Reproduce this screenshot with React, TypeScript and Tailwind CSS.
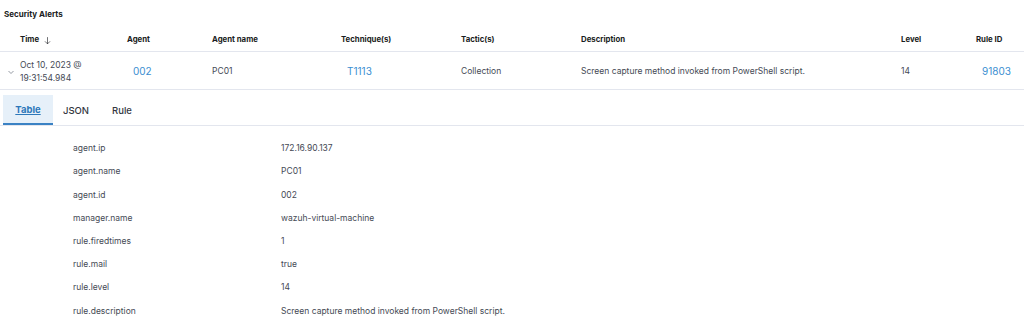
import React from "react";

const columns = [
  { label: "Time", w: "w-[107px]", sort: true },
  { label: "Agent", w: "w-[85px]" },
  { label: "Agent name", w: "w-[129px]" },
  { label: "Technique(s)", w: "w-[120px]" },
  { label: "Tactic(s)", w: "w-[120px]" },
  { label: "Description", w: "w-[320px]" },
  { label: "Level", w: "w-[75px]" },
  { label: "Rule ID", w: "w-[48px]" },
];

const fields: [string, string][] = [
  ["agent.ip", "172.16.90.137"],
  ["agent.name", "PC01"],
  ["agent.id", "002"],
  ["manager.name", "wazuh-virtual-machine"],
  ["rule.firedtimes", "1"],
  ["rule.mail", "true"],
  ["rule.level", "14"],
  ["rule.description", "Screen capture method invoked from PowerShell script."],
];

export default function App() {
  return (
    <div className="w-[1024px] h-[321px] overflow-hidden bg-white text-[#404550] font-['Inter',sans-serif]">
      {/* Titulo */}
      <div className="h-[29px] pl-[4px] pt-[8px] text-[8px] font-bold text-[#1a1c21]">Security Alerts</div>

      {/* Cabecalho */}
      <div className="flex h-[23px] items-center border-b border-[#e3e6ee] text-[7.8px] font-bold text-[#1a1c21]">
        <div className="w-[20px]" />
        {columns.map((c) => (
          <div key={c.label} className={`${c.w} flex items-center gap-[4px] shrink-0`}>
            {c.label}
            {c.sort && (
              <svg width="9" height="9" viewBox="0 0 16 16" fill="none" stroke="#1a1c21" strokeWidth="1.1">
                <path d="M8 2v12M3.5 9.5L8 14l4.5-4.5" />
              </svg>
            )}
          </div>
        ))}
      </div>

      {/* Linha */}
      <div className="flex h-[38px] items-center border-b border-[#e3e6ee] pt-[2px] text-[8.5px] text-[#454a55]">
        <div className="w-[20px] flex justify-center pl-[2px]">
          <svg width="8" height="8" viewBox="0 0 16 16" fill="none" stroke="#69707d" strokeWidth="1.4">
            <path d="M3 6l5 5 5-5" />
          </svg>
        </div>
        <div className="w-[107px] leading-[13px]">
          Oct 10, 2023 @<br />19:31:54.984
        </div>
        <div className="w-[85px] pl-[6px] text-[10px] text-[#3a8ed1]">002</div>
        <div className="w-[129px]">PC01</div>
        <div className="w-[120px] pl-[6px] text-[10px] text-[#3a8ed1]">T1113</div>
        <div className="w-[120px]">Collection</div>
        <div className="w-[320px]">Screen capture method invoked from PowerShell script.</div>
        <div className="w-[75px]">14</div>
        <div className="w-[48px] pl-[6px] text-[10px] text-[#3a8ed1]">91803</div>
      </div>

      {/* Abas */}
      <div className="mt-[5px] flex h-[31px] border-b border-[#e3e6ee] pl-[3px] text-[9.5px] font-medium text-[#343741]">
        <div className="w-[50px] flex items-center justify-center pt-[2px] bg-[#e6f0f9] border-b-2 border-[#3a82c4] font-bold text-[#2d78ba] underline">
          Table
        </div>
        <div className="w-[46px] flex items-center justify-center pt-[2px]">JSON</div>
        <div className="w-[46px] flex items-center justify-center pt-[2px]">Rule</div>
      </div>

      {/* Campos */}
      <div className="pt-[11px] text-[8.5px] text-[#454a55]">
        {fields.map(([k, v]) => (
          <div key={k} className="flex h-[23.2px] items-center">
            <div className="w-[281px] pl-[73px]">{k}</div>
            <div>{v}</div>
          </div>
        ))}
      </div>
    </div>
  );
}
